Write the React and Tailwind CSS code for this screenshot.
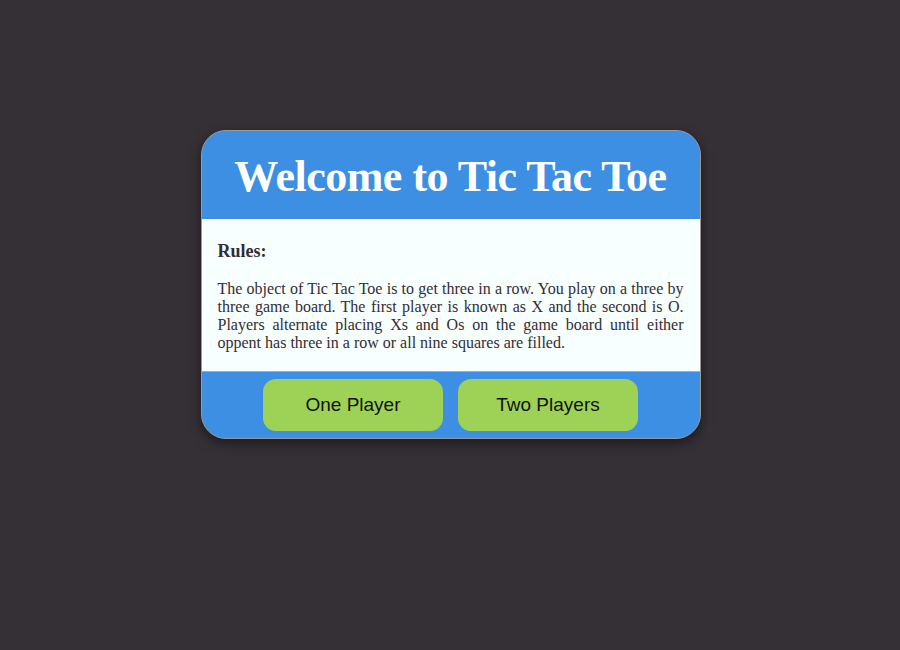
const ruleLines = [
  "The object of Tic Tac Toe is to get three in a row. You play on a three by",
  "three game board. The first player is known as X and the second is O.",
  "Players alternate placing Xs and Os on the game board until either",
];

export default function App() {
  return (
    <div className="min-h-screen w-full bg-[#353036] pt-[130px] pl-px flex justify-center">
      <div className="w-[500px] h-[309px] rounded-[25px] border border-[#9a9a9a] overflow-hidden bg-[#3d8fe3] shadow-[0_4px_12px_rgba(0,0,0,0.5)] flex flex-col">
        <div className="h-[88px] flex items-center justify-center">
          <h1 className="text-white font-bold text-[44px] tracking-[-0.5px] font-['Liberation_Serif',serif] leading-none pt-1">
            Welcome to Tic Tac Toe
          </h1>
        </div>
        <div className="bg-[#f8ffff] px-[16px] pt-[20px] pb-[19px] font-['Liberation_Serif',serif] text-[#332c33] border-b border-[#7db7ee]">
          <h2 className="font-bold text-[18px] leading-[24px]">Rules:</h2>
          <div className="text-[16px] leading-[18px] mt-[17px]">
            {ruleLines.map((line) => (
              <p key={line} className="text-justify [text-align-last:justify] whitespace-nowrap">
                {line}
              </p>
            ))}
            <p>oppent has three in a row or all nine squares are filled.</p>
          </div>
        </div>
        <div className="flex-1 flex justify-center items-start pt-[7px] gap-[15px]">
          <button className="w-[180px] h-[52px] rounded-[13px] bg-[#9ed256] text-[#111] text-[19px] font-['Liberation_Sans',sans-serif]">
            One Player
          </button>
          <button className="w-[180px] h-[52px] rounded-[13px] bg-[#9ed256] text-[#111] text-[19px] font-['Liberation_Sans',sans-serif]">
            Two Players
          </button>
        </div>
      </div>
    </div>
  );
}
